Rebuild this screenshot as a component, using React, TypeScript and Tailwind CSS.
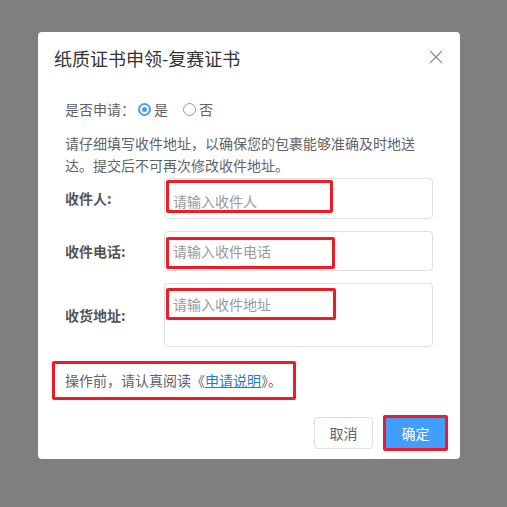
import { X } from "lucide-react";

const font = { fontFamily: '"Microsoft YaHei", "Noto Sans CJK SC", "Noto Sans", sans-serif' };

export default function App() {
  return (
    <div className="w-[507px] h-[507px] bg-[#7f7f7f] overflow-hidden" style={font}>
      <div className="ml-[38px] mt-[32px] w-[422px] h-[427px] bg-white rounded-[4px] flex flex-col text-[#5f6266]">
        {/* Header */}
        <div className="flex items-center justify-between pl-[16px] pr-[13px] pt-[14px]">
          <h2 className="text-[18px] leading-[24px] text-[#303133]">纸质证书申领-复赛证书</h2>
          <X className="w-[22px] h-[22px] text-[#8a8d93] -mt-[2px]" strokeWidth={1.3} />
        </div>

        {/* Body */}
        <div className="px-[27px] mt-[29px] text-[14px]">
          <div className="flex items-center leading-[20px]">
            <span>是否申请：</span>
            <span className="flex items-center gap-[2px] ml-[3px]">
              <span className="w-[13px] h-[13px] rounded-full border border-[#409eff] bg-[#409eff] flex items-center justify-center">
                <span className="w-[9px] h-[9px] rounded-full border-[2px] border-white bg-[#409eff]" />
              </span>
              <span className="ml-[1px]">是</span>
            </span>
            <span className="flex items-center gap-[2px] ml-[15px]">
              <span className="w-[13px] h-[13px] rounded-full border border-[#9a9a9a] bg-white" />
              <span className="ml-[1px]">否</span>
            </span>
          </div>

          <p className="mt-[13px] w-[356px] leading-[22px]">
            请仔细填写收件地址，以确保您的包裹能够准确及时地送达。提交后不可再次修改收件地址。
          </p>

          <div className="mt-[2px] flex flex-col gap-[12px]">
            <div className="flex items-center">
              <label className="w-[99px] font-bold text-[#555]">收件人:</label>
              <div className="relative flex-1">
                <input
                  className="w-full h-[41px] border border-[#dcdfe6] rounded-[4px] pl-[8px] pt-[4px] outline-none placeholder:text-[#999]"
                  placeholder="请输入收件人"
                />
                <div className="absolute left-[2px] top-[2px] w-[167px] h-[33px] border-[3px] border-[#ee1c25] rounded-[2px] pointer-events-none" />
              </div>
            </div>
            <div className="flex items-center">
              <label className="w-[99px] font-bold text-[#555]">收件电话:</label>
              <div className="relative flex-1">
                <input
                  className="w-full h-[40px] border border-[#dcdfe6] rounded-[4px] pl-[8px] outline-none placeholder:text-[#999]"
                  placeholder="请输入收件电话"
                />
                <div className="absolute left-[2px] top-[6px] w-[169px] h-[32px] border-[3px] border-[#ee1c25] rounded-[2px] pointer-events-none" />
              </div>
            </div>
            <div className="flex items-center">
              <label className="w-[99px] font-bold text-[#555]">收货地址:</label>
              <div className="relative flex-1">
                <textarea
                  className="block w-full h-[64px] resize-none border border-[#dcdfe6] rounded-[4px] pl-[8px] pt-[10px] leading-[20px] outline-none placeholder:text-[#999]"
                  placeholder="请输入收件地址"
                />
                <div className="absolute left-[2px] top-[5px] w-[170px] h-[32px] border-[3px] border-[#ee1c25] rounded-[2px] pointer-events-none" />
              </div>
            </div>
          </div>
        </div>

        {/* Note */}
        <div className="ml-[14px] mt-[14px] w-[244px] h-[39px] border-[3px] border-[#ee1c25] rounded-[2px] flex items-center pl-[10px] text-[14px]">
          <span>
            操作前，请认真阅读《<a className="text-[#1a7fd0] underline">申请说明</a>》。
          </span>
        </div>

        {/* Footer */}
        <div className="mt-[15px] flex justify-end items-center pr-[12px] gap-[10px]">
          <button className="w-[59px] h-[32px] border border-[#dcdfe6] rounded-[4px] text-[14px] text-[#606266] bg-white">
            取消
          </button>
          <div className="border-[3px] border-[#ee1c25] rounded-[2px]">
            <button className="block w-[59px] h-[30px] bg-[#409eff] text-white text-[14px]">确定</button>
          </div>
        </div>
      </div>
    </div>
  );
}
